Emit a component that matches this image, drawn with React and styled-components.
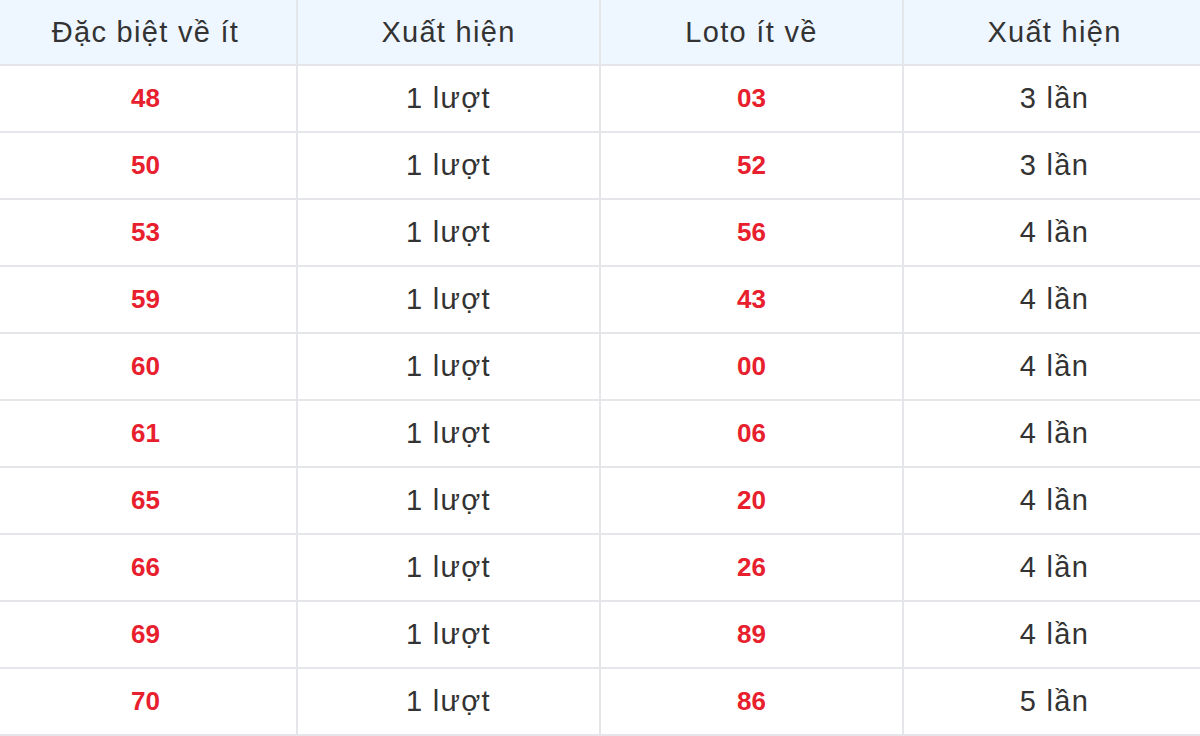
import React from 'react';
import styled, { createGlobalStyle } from 'styled-components';

const GlobalStyle = createGlobalStyle`
    html, body {
        margin: 0;
        padding: 0;
        background: #ffffff;
        overflow: hidden;
    }
    body {
        font-family: "Liberation Sans", Arial, sans-serif;
    }
`;

const rows = [
    ['48', '1 lượt', '03', '3 lần'],
    ['50', '1 lượt', '52', '3 lần'],
    ['53', '1 lượt', '56', '4 lần'],
    ['59', '1 lượt', '43', '4 lần'],
    ['60', '1 lượt', '00', '4 lần'],
    ['61', '1 lượt', '06', '4 lần'],
    ['65', '1 lượt', '20', '4 lần'],
    ['66', '1 lượt', '26', '4 lần'],
    ['69', '1 lượt', '89', '4 lần'],
    ['70', '1 lượt', '86', '5 lần'],
];

export default function App() {
    return (
        <>
            <GlobalStyle />
            <Wrapper>
                <Table>
                    <thead>
                        <tr>
                            <HeadCell>Đặc biệt về ít</HeadCell>
                            <HeadCell>Xuất hiện</HeadCell>
                            <HeadCell>Loto ít về</HeadCell>
                            <HeadCell>Xuất hiện</HeadCell>
                        </tr>
                    </thead>
                    <tbody>
                        {rows.map((r, i) => (
                            <tr key={i}>
                                <Cell $red>{r[0]}</Cell>
                                <Cell>{r[1]}</Cell>
                                <Cell $red>{r[2]}</Cell>
                                <Cell>{r[3]}</Cell>
                            </tr>
                        ))}
                    </tbody>
                </Table>
            </Wrapper>
        </>
    );
}

const Wrapper = styled.div`
    width: 1200px;
    height: 736px;
    overflow: hidden;
`;

const Table = styled.table`
    width: 1214px;
    margin-left: -7px;
    border-collapse: collapse;
    table-layout: fixed;
`;

const HeadCell = styled.th`
    height: 64px;
    padding: 0;
    background: #eef6ff;
    border: 2px solid #e4e6ea;
    border-top: 0;
    color: #333333;
    font-size: 29px;
    letter-spacing: 1.3px;
    font-weight: 400;
    text-align: center;
    vertical-align: middle;
`;

const Cell = styled.td`
    height: 65px;
    padding: 0;
    border: 2px solid #e4e6ea;
    color: ${p => (p.$red ? '#e8202d' : '#333333')};
    font-size: ${p => (p.$red ? '26px' : '29px')};
    letter-spacing: ${p => (p.$red ? '0' : '1.3px')};
    font-weight: ${p => (p.$red ? 700 : 400)};
    text-align: center;
    vertical-align: middle;
`;
